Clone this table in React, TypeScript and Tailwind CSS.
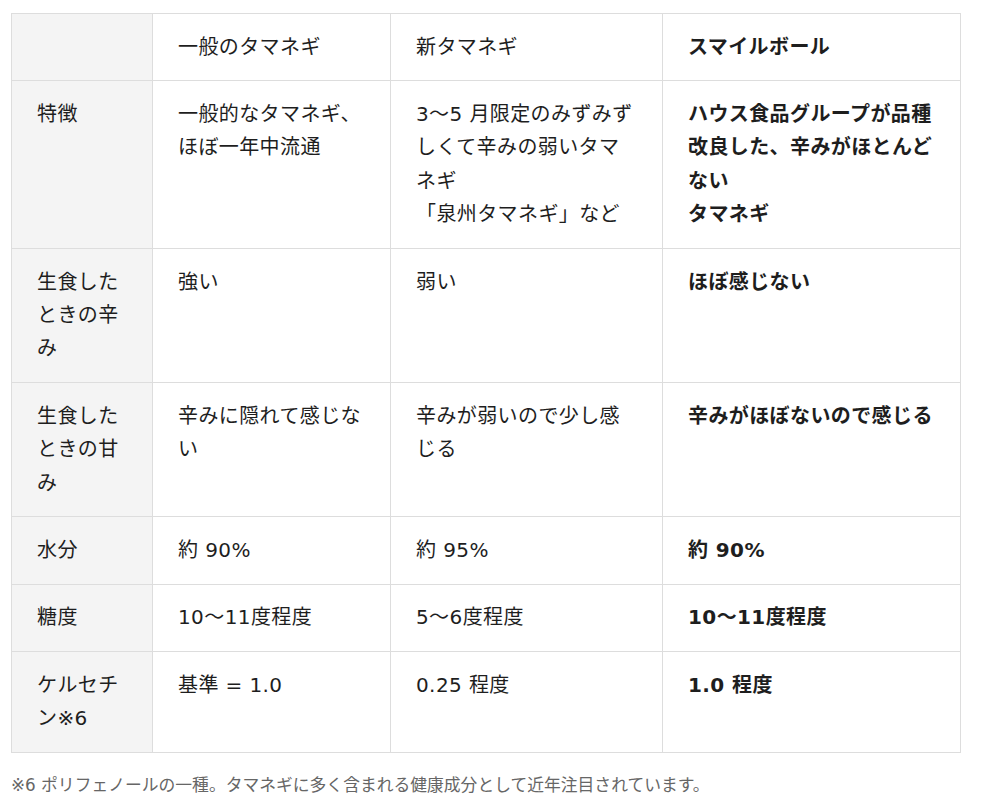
import React from "react";

const font = { fontFamily: '"DejaVu Sans", "Noto Sans CJK JP", sans-serif' };

type Row = { head: React.ReactNode; a: React.ReactNode; b: React.ReactNode; c: React.ReactNode };

const rows: Row[] = [
  {
    head: "特徴",
    a: "一般的なタマネギ、ほぼ一年中流通",
    b: (
      <>
        3～5 月限定のみずみずしくて辛みの弱いタマネギ
        <br />
        「泉州タマネギ」など
      </>
    ),
    c: (
      <>
        ハウス食品グループが品種改良した、辛みがほとんどない
        <br />
        タマネギ
      </>
    ),
  },
  { head: "生食したときの辛み", a: "強い", b: "弱い", c: "ほぼ感じない" },
  {
    head: "生食したときの甘み",
    a: "辛みに隠れて感じない",
    b: "辛みが弱いので少し感じる",
    c: "辛みがほぼないので感じる",
  },
  { head: "水分", a: "約 90%", b: "約 95%", c: "約 90%" },
  { head: "糖度", a: "10～11度程度", b: "5～6度程度", c: "10～11度程度" },
  { head: "ケルセチン※6", a: "基準 = 1.0", b: "0.25 程度", c: "1.0 程度" },
];

const cell =
  "border border-[#dddddd] px-[25px] pt-[16.5px] pb-[16.5px] align-top text-left leading-[33.4px] break-all";

export default function App() {
  return (
    <div className="bg-white min-h-[809px] w-[1000px] pt-[13px] pl-[11px] text-[#1e1e1e]" style={font}>
      <table className="table-fixed border-collapse w-[949px] text-[20px] tracking-[0.4px]">
        <colgroup>
          <col className="w-[141px]" />
          <col className="w-[238px]" />
          <col className="w-[272px]" />
          <col className="w-[298px]" />
        </colgroup>
        <tbody>
          <tr>
            <td className={`${cell} bg-[#f4f4f4]`}></td>
            <td className={`${cell} font-normal`}>一般のタマネギ</td>
            <td className={`${cell} font-normal`}>新タマネギ</td>
            <td className={`${cell} font-bold`}>スマイルボール</td>
          </tr>
          {rows.map((r, i) => (
            <tr key={i}>
              <td className={`${cell} bg-[#f4f4f4]`}>{r.head}</td>
              <td className={cell}>{r.a}</td>
              <td className={cell}>{r.b}</td>
              <td className={`${cell} font-bold`}>{r.c}</td>
            </tr>
          ))}
        </tbody>
      </table>
      <p className="mt-[19px] text-[16.8px] leading-[27px] text-[#666666]">
        ※6 ポリフェノールの一種。タマネギに多く含まれる健康成分として近年注目されています。
      </p>
    </div>
  );
}
